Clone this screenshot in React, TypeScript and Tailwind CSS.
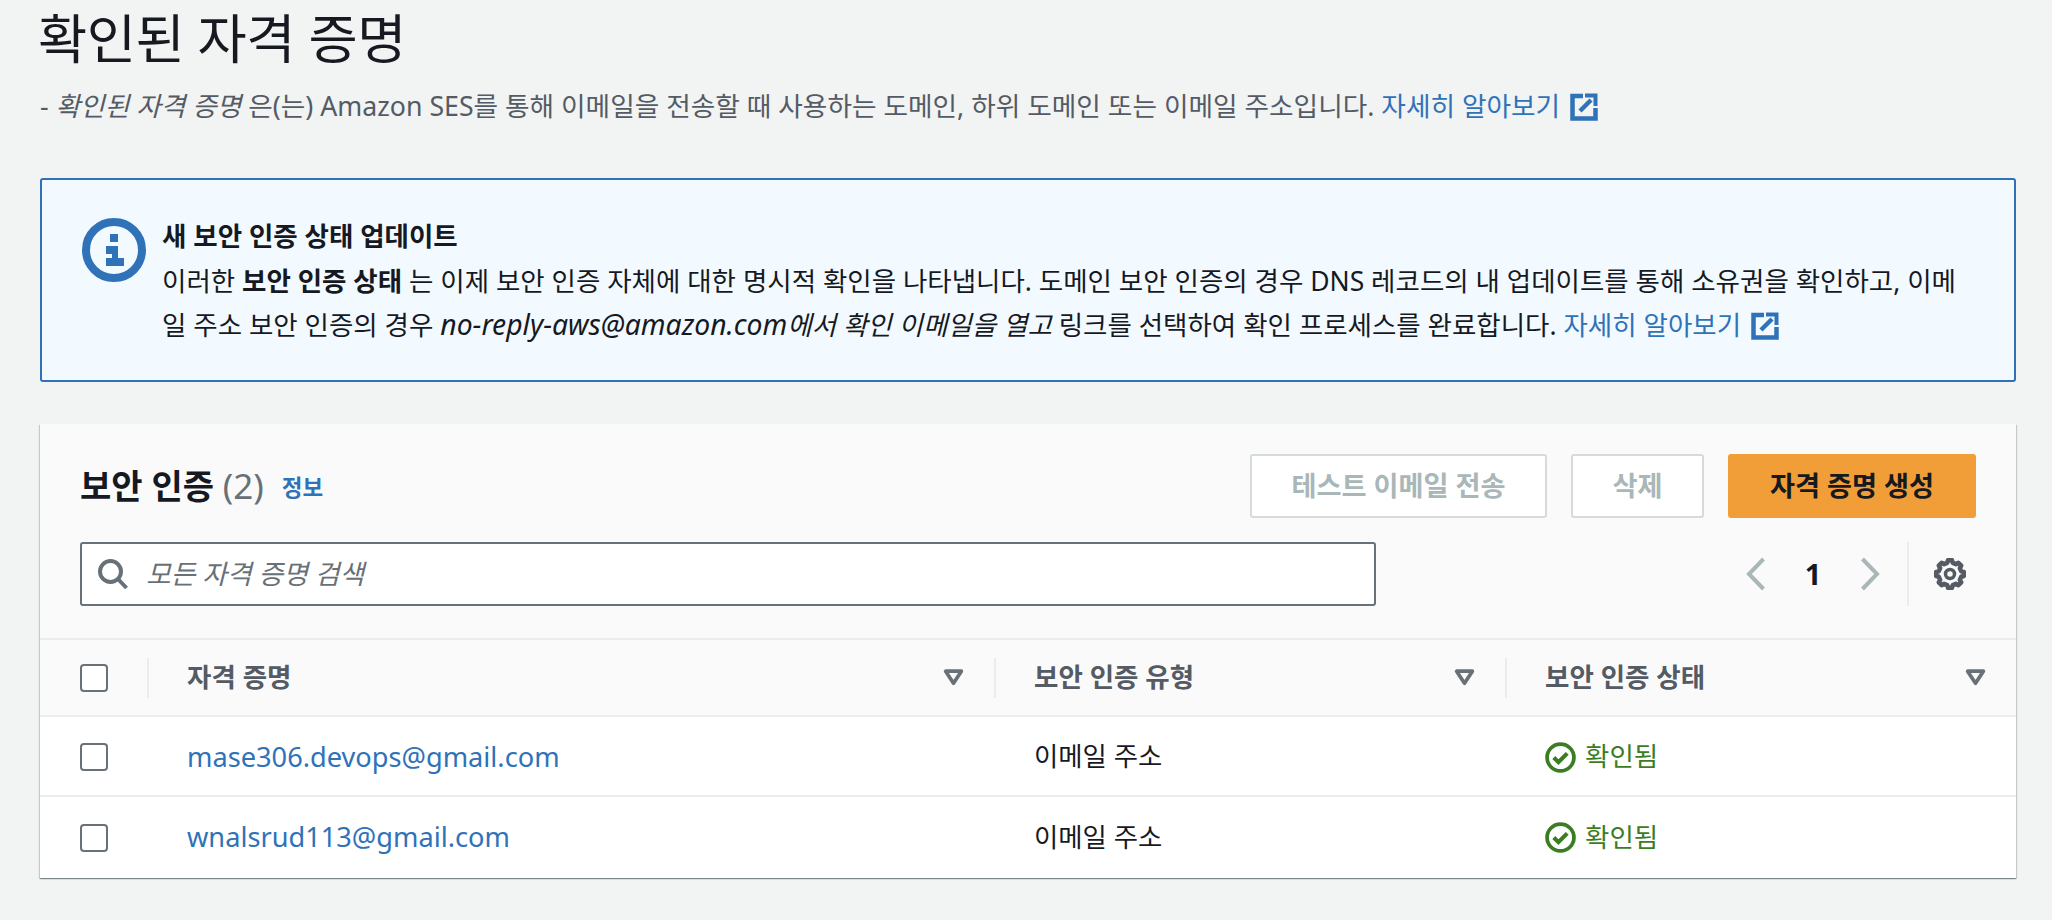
const gearPath = (() => {
  const pts: string[] = []
  const teeth = 8
  for (let i = 0; i < teeth; i++) {
    const a = (i * Math.PI * 2) / teeth
    const w = Math.PI / teeth
    const ring: [number, number][] = [
      [11.5, a - w * 0.62],
      [14, a - w * 0.36],
      [14, a + w * 0.36],
      [11.5, a + w * 0.62],
    ]
    ring.forEach(([r, t]) => {
      pts.push(`${(16 + r * Math.sin(t)).toFixed(2)} ${(16 - r * Math.cos(t)).toFixed(2)}`)
    })
  }
  return `M${pts.join("L")}Z`
})()

function ExternalIcon() {
  return (
    <svg width="28" height="28" viewBox="0 0 28 28" fill="none" stroke="#2f72b8" strokeWidth="4.5" className="inline-block shrink-0 align-[-5px] ml-[10px]">
      <path d="M13 3H2.500v22.500H25.500V15" />
      <path d="M10 18 21 7" />
      <path d="M15 2.500h10.500V13" strokeWidth="4" />
    </svg>
  )
}

function InfoIcon() {
  return (
    <svg width="64" height="64" viewBox="0 0 64 64" className="shrink-0">
      <circle cx="32" cy="32" r="28" fill="none" stroke="#2f72b8" strokeWidth="8" />
      <path d="M28 16h8v8h-8zM24 28h12v12h6v8H24v-8h6v-4h-6z" fill="#2f72b8" />
    </svg>
  )
}

function CheckIcon() {
  return (
    <svg width="31" height="31" viewBox="0 0 30 30" fill="none" stroke="#3b7d23" className="shrink-0">
      <circle cx="15" cy="15" r="13" strokeWidth="3.600" />
      <path d="M8.500 15l4.500 4.500 8.500-8.500" strokeWidth="4" />
    </svg>
  )
}

function Caret() {
  return (
    <svg width="21" height="17" viewBox="0 0 20 16" className="shrink-0">
      <path d="M2.500 2h15L10 13.500z" fill="none" stroke="#687078" strokeWidth="3.500" strokeLinejoin="round" />
    </svg>
  )
}

function Box() {
  return <div className="w-[28px] h-[28px] border-2 border-[#687078] rounded-[4px] bg-white" />
}

const rows = ["mase306.devops@gmail.com", "wnalsrud113@gmail.com"]
const columns = ["자격 증명", "보안 인증 유형", "보안 인증 상태"]

export default function App() {
  return (
    <div className="h-[920px] w-[2052px] overflow-hidden bg-[#f2f3f3] pl-10 pr-9 text-[#16191f] font-['Noto_Sans','Noto_Sans_CJK_KR',sans-serif]">
      <h1 className="pt-[4px] -ml-[2px] text-[53.500px] leading-[70px] font-normal tracking-[-0.5px]">확인된 자격 증명</h1>
      <p className="mt-[14px] text-[26.700px] leading-[36px] text-[#545b64] whitespace-nowrap">
        - <i>확인된 자격 증명</i> 은(는) Amazon SES를 통해 이메일을 전송할 때 사용하는 도메인, 하위 도메인 또는 이메일 주소입니다.{" "}
        <a className="text-[#2f72b8]">자세히 알아보기</a>
        <ExternalIcon />
      </p>

      <div className="mt-[54px] h-[204px] flex gap-4 border-2 border-[#2f72b8] rounded-[3px] bg-[#f3faff] pl-10 pt-[38px]">
        <InfoIcon />
        <div className="text-[26.500px] leading-[44.500px] whitespace-nowrap -mt-[4px]">
          <div className="font-bold">새 보안 인증 상태 업데이트</div>
          <div>
            이러한 <b>보안 인증 상태</b> 는 이제 보안 인증 자체에 대한 명시적 확인을 나타냅니다. 도메인 보안 인증의 경우 DNS 레코드의 내 업데이트를 통해 소유권을 확인하고, 이메
            <br />일 주소 보안 인증의 경우 <i><span className="text-[28.300px] leading-none">no-reply-aws@amazon.com</span>에서 확인 이메일을 열고</i> 링크를 선택하여 확인 프로세스를 완료합니다.{" "}
            <a className="text-[#2f72b8]">자세히 알아보기</a>
            <ExternalIcon />
          </div>
        </div>
      </div>

      <div className="mt-[42px] bg-white shadow-[0_1px_1px_rgba(0,28,36,0.3),1px_1px_1px_rgba(0,28,36,0.15),-1px_1px_1px_rgba(0,28,36,0.15)]">
        <div className="h-[216px] bg-[#fafafa] border-b-2 border-[#eaeded] pl-10 pr-10 pt-[30px]">
          <div className="flex items-center h-[64px]">
            <h2 className="text-[34px] font-bold leading-[44px]">
              보안 인증 <span className="font-normal text-[35px] leading-none text-[#687078]">(2)</span>
            </h2>
            <a className="ml-[18px] mt-[3px] text-[22.500px] font-bold text-[#2f72b8]">정보</a>
            <div className="ml-auto flex gap-6 text-[27.200px] font-bold">
              <button className="w-[297px] h-[64px] border-2 border-[#d5dbdb] rounded-[3px] bg-white text-[#aab7b8]">테스트 이메일 전송</button>
              <button className="w-[133px] h-[64px] border-2 border-[#d5dbdb] rounded-[3px] bg-white text-[#aab7b8]">삭제</button>
              <button className="w-[248px] h-[64px] rounded-[3px] bg-[#f29e38]">자격 증명 생성</button>
            </div>
          </div>
          <div className="mt-6 flex items-center h-[64px]">
            <div className="w-[1296px] h-[64px] flex items-center border-2 border-[#687078] rounded-[3px] bg-white pl-[15px]">
              <svg width="32" height="32" viewBox="0 0 32 32" fill="none" stroke="#687078" strokeWidth="4" className="shrink-0">
                <circle cx="13.500" cy="13.500" r="10.500" />
                <path d="M21 21l8.500 9" />
              </svg>
              <input placeholder="모든 자격 증명 검색" className="ml-[17px] flex-1 bg-transparent outline-none text-[26.800px] italic placeholder:text-[#687078]" />
            </div>
            <div className="ml-auto flex items-center">
              <svg width="20" height="34" viewBox="0 0 20 34" fill="none" stroke="#aab7b8" strokeWidth="4">
                <path d="M17.500 2 3 17l14.500 15" />
              </svg>
              <span className="w-[94px] text-center text-[29px] font-bold">1</span>
              <svg width="20" height="34" viewBox="0 0 20 34" fill="none" stroke="#aab7b8" strokeWidth="4">
                <path d="M2.500 2 17 17 2.500 32" />
              </svg>
              <div className="ml-[27px] h-[64px] border-l-2 border-[#eaeded]" />
              <svg width="32" height="32" viewBox="0 0 32 32" fill="none" stroke="#545b64" className="ml-[25px] mr-[10px]">
                <path d={gearPath} strokeWidth="4.500" strokeLinejoin="round" />
                <circle cx="16" cy="16" r="4.500" strokeWidth="3.500" />
              </svg>
            </div>
          </div>
        </div>

        <div className="grid grid-cols-[107px_847px_511px_1fr]">
          <div className="h-[77px] bg-[#fafafa] border-b-2 border-[#eaeded] flex items-center pl-10">
            <Box />
          </div>
          {columns.map((c) => (
            <div key={c} className="h-[77px] bg-[#fafafa] border-b-2 border-[#eaeded] flex items-center">
              <div className="w-full h-[40px] border-l-2 border-[#eaeded] flex items-center justify-between pl-[38px] pr-[30px]">
                <span className="text-[26.500px] font-bold text-[#545b64]">{c}</span>
                <Caret />
              </div>
            </div>
          ))}
          {rows.map((r, i) => (
            <div key={r} className={`col-span-4 grid grid-cols-subgrid items-center ${i === 0 ? "h-[80px] pt-[2px] border-b-2 border-[#eaeded]" : "h-[81px]"}`}>
              <div className="pl-10 flex">
                <Box />
              </div>
              <a className="pl-10 text-[27.200px] text-[#2f72b8]">{r}</a>
              <div className="pl-10 text-[26.400px]">이메일 주소</div>
              <div className="pl-10 flex items-center gap-[9px] text-[26.500px] text-[#3b7d23]">
                <CheckIcon />
                확인됨
              </div>
            </div>
          ))}
        </div>
      </div>
    </div>
  )
}
